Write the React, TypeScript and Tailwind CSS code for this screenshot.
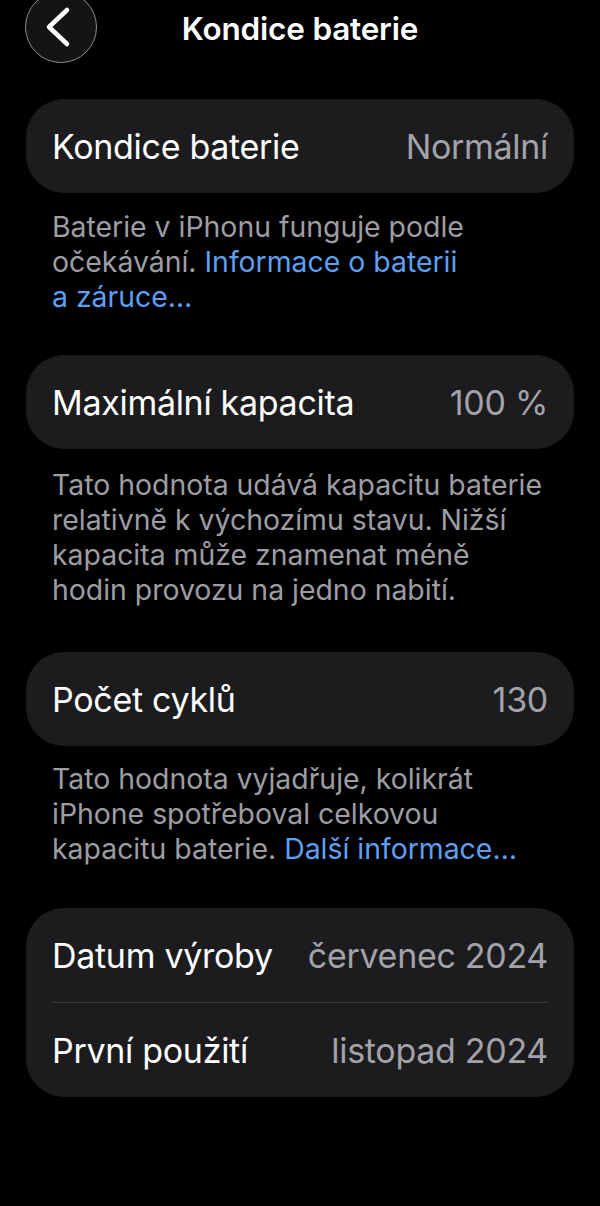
import React from "react";

function Row({ label, value }: { label: string; value: string }) {
  return (
    <div className="flex h-[94px] items-center justify-between px-[26px]">
      <span className="text-[34px] tracking-[-0.3px] text-white">{label}</span>
      <span className="text-[34px] tracking-[-0.3px] text-[#a3a2a9]">{value}</span>
    </div>
  );
}

export default function App() {
  return (
    <div
      className="min-h-[1206px] w-full overflow-hidden bg-black px-[26px] text-white"
      style={{ fontFamily: "Inter, 'Noto Sans', sans-serif" }}
    >
      {/* Header */}
      <div className="relative grid h-[63px] grid-cols-[1fr_auto_1fr] items-center">
        <div className="-ml-[1px] -mt-[9px] flex h-[72px] w-[72px] items-center justify-center rounded-full border border-[#8c8c8c] bg-[#141414]">
          <svg width="72" height="72" viewBox="0 0 72 72" className="-m-px">
            <path
              d="M42 19 L24 36 L42 53"
              fill="none"
              stroke="white"
              strokeWidth="4.5"
              strokeLinecap="round"
              strokeLinejoin="round"
            />
          </svg>
        </div>
        <div className="-mt-[5px] text-[31.5px] font-semibold tracking-[-0.2px] text-white">
          Kondice baterie
        </div>
        <div />
      </div>

      {/* Card 1 */}
      <div className="mt-[36px] rounded-[38px] bg-[#1c1c1e]">
        <Row label="Kondice baterie" value="Normální" />
      </div>
      <p className="mt-[16px] px-[26px] text-[28.4px] leading-[35px] text-[#9d9da2]">
        Baterie v iPhonu funguje podle
        <br />
        očekávání. <span className="text-[#5f9ff2]">Informace o baterii</span>
        <br />
        <span className="text-[#5f9ff2]">a záruce…</span>
      </p>

      {/* Card 2 */}
      <div className="mt-[41px] rounded-[38px] bg-[#1c1c1e]">
        <Row label="Maximální kapacita" value="100 %" />
      </div>
      <p className="mt-[18px] px-[26px] text-[28.4px] leading-[35px] text-[#9d9da2]">
        Tato hodnota udává kapacitu baterie
        <br />
        relativně k výchozímu stavu. Nižší
        <br />
        kapacita může znamenat méně
        <br />
        hodin provozu na jedno nabití.
      </p>

      {/* Card 3 */}
      <div className="mt-[45px] rounded-[38px] bg-[#1c1c1e]">
        <Row label="Počet cyklů" value="130" />
      </div>
      <p className="mt-[15px] px-[26px] text-[28.4px] leading-[35px] text-[#9d9da2]">
        Tato hodnota vyjadřuje, kolikrát
        <br />
        iPhone spotřeboval celkovou
        <br />
        kapacitu baterie. <span className="text-[#5f9ff2]">Další informace…</span>
      </p>

      {/* Card 4 */}
      <div className="mt-[42px] rounded-[38px] bg-[#1c1c1e]">
        <Row label="Datum výroby" value="červenec 2024" />
        <div className="mx-[26px] h-px bg-[#3a3a3c]" />
        <Row label="První použití" value="listopad 2024" />
      </div>
    </div>
  );
}
